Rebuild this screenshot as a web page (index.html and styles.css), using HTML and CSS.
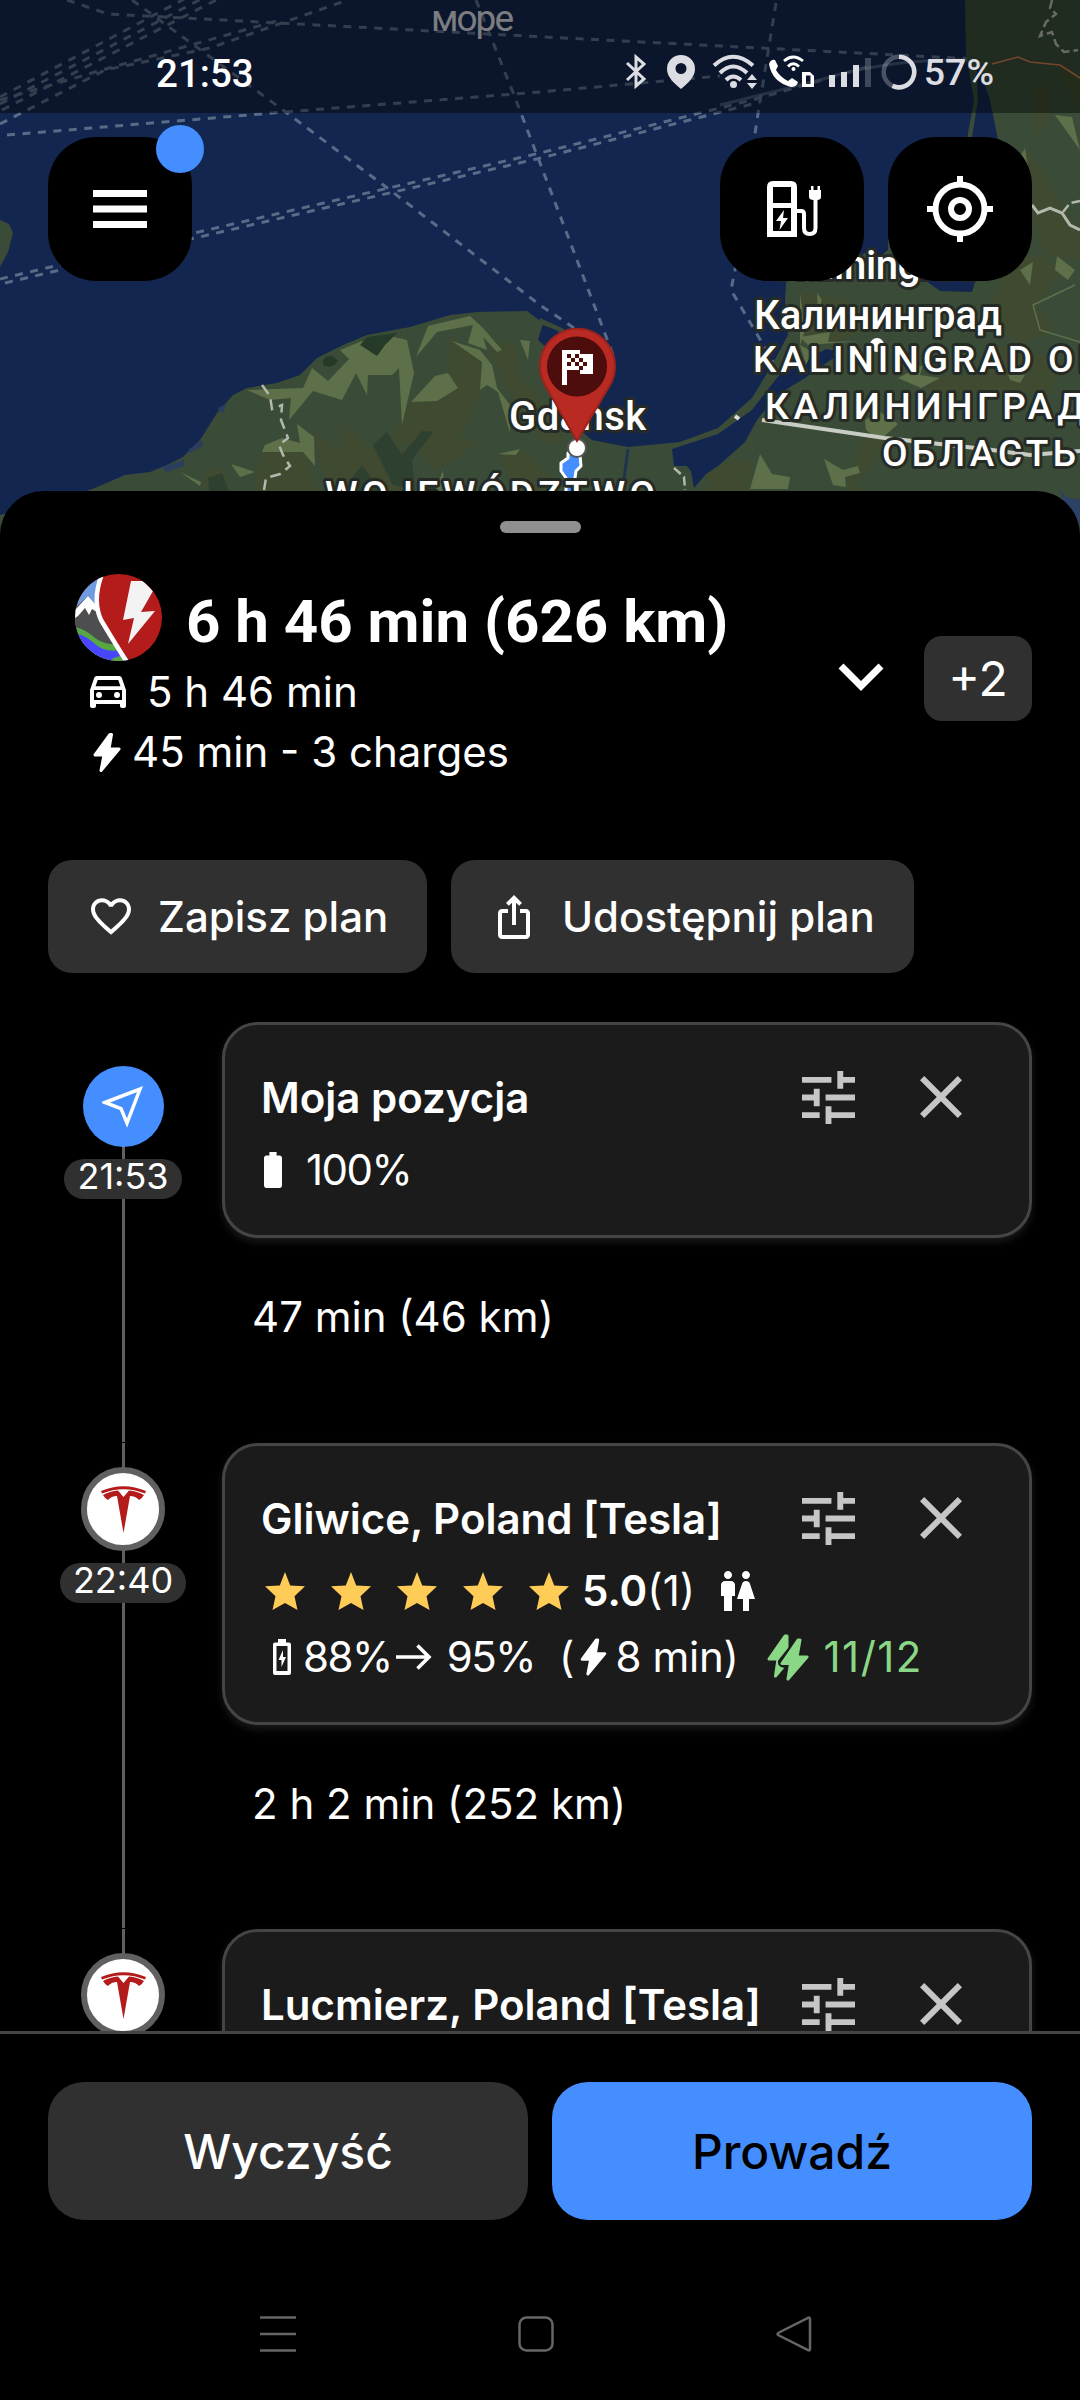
FILE: index.html
```html
<!DOCTYPE html>
<html lang="pl">
<head>
  <meta charset="UTF-8">
  <meta name="viewport" content="width=device-width, initial-scale=1.0">
  <title>Plan podróży</title>
  <link rel="stylesheet" href="styles.css">
</head>
<body>
  <!-- shared icons -->
  <svg class="sprite" width="0" height="0">
    <symbol id="tune" viewBox="3 3 18 18">
      <path d="M3,17V19H9V17H3M3,5V7H13V5H3M13,21V19H21V17H13V15H11V21H13M7,9V11H3V13H7V15H9V9H7M21,13V11H11V13H21M15,9H17V7H21V5H17V3H15V9Z"/>
    </symbol>
    <symbol id="close" viewBox="5 5 14 14">
      <path d="M19,6.41L17.59,5L12,10.59L6.41,5L5,6.41L10.59,12L5,17.59L6.41,19L12,13.41L17.59,19L19,17.59L13.41,12L19,6.41Z"/>
    </symbol>
    <symbol id="bolt" viewBox="0 0 28 40">
      <path d="M17 2 L2 22.500 H11 L8 38 L26 16.500 H16 L18.500 2 Z" fill="currentColor" stroke="currentColor" stroke-width="3" stroke-linejoin="round"/>
    </symbol>
    <symbol id="star" viewBox="0 0 40 38">
      <path d="M20 0 L25.200 13.500 L40 14.300 L29.500 24.200 L32.500 38 L20 31 L7.500 38 L10.500 24.200 L0 14.300 L14.800 13.500 Z"/>
    </symbol>
    <symbol id="tesla" viewBox="0 0 45 47">
      <path d="M0 5 Q22.500 -4.500 45 5 L44 7.500 Q22.500 -1 1 7.500 Z"/>
      <path d="M2 9 Q9 5 17 4.500 L22.500 11 L28 4.500 Q36 5 43 9 Q41.500 12 38 14 Q34.500 10 29 10 L22.500 47 L16 10 Q10.500 10 7 14 Q3.500 12 2 9 Z"/>
    </symbol>
  </svg>

  <div class="phone">
    <section class="map">
      <svg class="map-canvas" width="1080" height="545" viewBox="0 0 1080 545">
        <rect width="1080" height="545" fill="#13264f"/>

        <!-- ferry routes -->
        <g fill="none" stroke="#586b87" stroke-width="3" stroke-dasharray="8 7.500">
          <path d="M67 0 L108 14 L545 37 L975 59"/>
          <path d="M0 97 L188 -3 M0 104 L205 -3 M2 110 L222 -3 M0 124 L105 70 L210 48 L348 0"/>
          <path d="M0 100 L95 72 L280 20"/>
          <path d="M7 135 L285 112 L540 92 L720 76"/>
          <path d="M0 279 L190 234 L540 153 L760 98 L870 66"/>
          <path d="M5 283 L195 238 L545 157 L760 102"/>
          <path d="M132 0 L283 110 L390 190 L540 305 L580 332"/>
          <path d="M476 0 L514 95 L540 163 L615 360"/>
          <path d="M776 3 L757 120 L735 270 L731 290 L781 375"/>
        </g>
        <path d="M720 105 L820 80 Q890 58 975 60" fill="none" stroke="#586b87" stroke-width="3" opacity=".7"/>

        <!-- land -->
        <g fill="#3a4c38">
          <path d="M0 220 L9 224 L13 233 L8 252 L0 267 Z"/>
          <path d="M0 515 L60 500 L95 488 L125 475 L150 472 L167 465 L183 457 L200 440 L217 413 L233 395 L247 388 L277 383 L300 375 L317 358 L343 345 L367 335 L410 327 L450 315 L477 312 L527 311 L543 323 L538 340 L560 360 L575 395 L580 430 L592 440 L628 447 L680 442 L718 428 L752 398 L772 365 L788 335 L785 300 L786 282 L850 262 L930 215 L965 150 L974 100 L966 55 L965 0 L1080 0 L1080 545 L0 545 Z"/>
          <path d="M540 318 L562 328 L576 338 L572 342 L556 330 L540 324 Z"/>
        </g>
        <g fill="#13264f">
          <path d="M866 137 H888 V250 L866 268 Z"/>
          <path d="M976 60 L990 100 L998 140 L985 250 L972 292 L940 291 L922 278 L950 200 L972 137 L978 100 Z"/>
          <path d="M672 449 L692 472 L694 486 L703 476 L718 466 L745 442 L757 420 L777 395 L805 378 L842 352 L826 349 L803 362 L780 374 L752 410 L718 434 Z"/>
          <path d="M672 449 L674 466 L690 466 L694 488 L706 474 L700 455 Z"/>
        </g>
        <path d="M628 449 L623 486" stroke="#20344f" stroke-width="3" fill="none"/>

        <!-- terrain patches -->
        <g fill="#3f4a30">
          <path d="M408 406 L450 376 L450 335 L480 359 L483 390 L460 440 L480 442 L435 470 L395 432 Z"/>
          <path d="M487 340 L515 345 L520 375 L545 405 L565 440 L545 445 L520 410 L500 375 Z"/>
          <path d="M312 428 L338 452 L345 425 L372 450 L400 430 L408 500 L330 500 Z"/>
          <path d="M262 452 L304 453 L320 500 L250 500 Z M205 472 L225 468 L230 500 L203 500 Z"/>
          <path d="M498 455 L520 450 L550 475 L540 500 L510 480 Z"/>
          <path d="M706 475 L735 459 L753 463 L745 500 L712 495 Z"/>
          <path d="M800 292 L850 300 L870 330 L830 345 L800 340 Z"/>
          <path d="M1000 260 L1045 255 L1060 275 L1035 305 L1055 330 L1020 345 L985 310 L1000 290 Z"/>
          <path d="M925 378 L985 375 L1000 345 L1060 360 L1050 395 L1000 390 L960 395 L930 390 Z"/>
          <path d="M1010 160 L1030 150 L1060 200 L1080 230 L1080 260 L1045 255 Z"/>
          <path d="M865 430 L885 440 L870 465 L855 485 L865 495 L845 492 Z"/>
          <path d="M1035 90 L1050 80 L1050 115 L1037 140 Z M1065 60 L1080 80 L1080 110 L1060 75 Z"/>
        </g>
        <g fill="#5e7049">
          <path d="M247 390 L303 388 L312 368 L328 381 L349 359 L340 350 L362 341 L378 355 L390 336 L407 340 L414 373 L402 425 L399 368 L392 375 L368 375 L367 395 L356 373 L342 400 L313 391 L289 420 L291 398 L270 400 Z"/>
          <path d="M416 357 L428 326 L470 316 L483 328 L502 350 L497 352 L483 337 L487 350 L468 343 L473 325 L437 332 Z"/>
          <path d="M411 402 L435 376 L448 373 L458 388 L437 401 Z"/>
          <path d="M452 341 L480 350 L492 365 L497 388 L510 405 L510 433 L498 392 L487 385 L480 390 L482 362 Z"/>
          <path d="M297 424 L314 437 L315 466 L303 452 L262 452 L265 445 L282 438 L300 443 Z M231 464 L255 472 L240 477 Z M180 472 L201 482 L200 486 Z"/>
          <path d="M520 340 L530 341 L528 360 Z M498 454 L520 449 L516 455 Z M443 470 L445 500 L432 500 Z"/>
          <path d="M760 454 L772 474 L790 477 L788 489 L750 489 Z M824 459 L843 470 L858 466 L860 473 L845 477 L846 487 L833 485 Z"/>
          <path d="M800 293 L805 330 L800 345 L812 352 L806 365 L800 345 Z M817 293 L822 300 L818 312 Z"/>
          <path d="M898 378 L923 365 L920 375 L940 378 L921 388 Z M865 420 L880 412 L898 424 L880 440 L866 430 Z"/>
          <path d="M1057 256 L1075 270 L1068 280 L1055 270 Z M1020 270 L1033 262 L1030 285 Z M1007 370 L1025 375 L1020 383 L1010 380 Z"/>
          <path d="M1055 115 L1072 117 L1080 150 Z M1025 148 L1030 180 L1018 160 Z M800 337 L830 332 L828 342 L860 341 L808 345 Z"/>
        </g>
        <g fill="#2e402f">
          <path d="M373 445 L387 432 L402 455 L422 431 L433 432 L412 460 L415 490 L393 485 Z M208 478 L222 473 L232 500 L210 500 Z M349 482 L362 465 L380 490 L345 495 Z"/>
          <path fill="#263a28" d="M360 345 L367 337 L397 333 L385 345 L377 356 Z M323 360 Q330 351 338 361 Q332 370 323 365 Z"/>
        </g>
        <path d="M1075 285 L1033 305 L1040 330 L1080 342" fill="none" stroke="#5e7049" stroke-width="1.500"/>
        <path d="M1058 488 L1066 497 L1080 500 L1080 525 L1068 510 Z" fill="#2d4065"/>
        <g fill="#2b3e5e">
          <path d="M218 408 L226 404 L224 412 L219 412 Z M188 450 L202 440 L203 446 L190 453 Z M162 467 L184 460 L184 466 L166 472 Z"/>
        </g>

        <!-- borders and roads -->
        <g fill="none" stroke="#b3b8ae">
          <path d="M262 385 L270 396 L272 409 L282 405 L281 420 L288 438 L279 445 L283 455 L290 466 L280 474 L266 478 L264 490" stroke-width="2.500" stroke-dasharray="11 6"/>
          <path d="M1052 0 L1050 8 L1056 14 L1046 22 L1040 36 L1052 32 L1056 44 L1064 52 L1078 50" stroke-width="2.500" stroke-dasharray="9 4"/>
          <path d="M1032 205 L1038 213 L1050 208 L1062 213 L1070 225 L1080 230" stroke-width="3"/>
          <path d="M1063 212 L1070 203 L1080 201 M674 468 L684 477 L685 490" stroke-width="2.500" stroke-dasharray="9 4"/>
          <path d="M762 420 L885 438 L985 449 L1030 455 L1080 451" stroke="#c8ccc4" stroke-width="4"/>
        </g>
        <path d="M992 64 L1018 57 L1030 62 L1060 65 L1080 78" fill="none" stroke="#c9784a" stroke-width="1.500"/>
        <circle cx="877" cy="345" r="7" fill="#fff"/>
        <path d="M735 416 L739 419" stroke="#ddd" stroke-width="4"/>

        <!-- route -->
        <path d="M568 453 L568 458 L561 463 L561 471 L566 478 L566 500 H573 L575 478 L576 471 L581 466 L580 455 Z" fill="#448eff" stroke="#fff" stroke-width="3" stroke-linejoin="round"/>

        <g class="map-label">
          <text x="431" y="31" font-size="37" textLength="83" class="sea-label">море</text>
          <text x="509" y="430" font-size="40" textLength="137">Gdańsk</text>
          <text x="325" y="507" font-size="37" textLength="330">WOJEWÓDZTWO</text>
          <text x="778" y="279" font-size="40" textLength="199">Kaliningrad</text>
          <text x="754" y="329" font-size="40" textLength="248">Калининград</text>
          <text x="753" y="372" font-size="37" textLength="279">KALININGRAD</text>
          <text x="1048" y="372" font-size="37" letter-spacing="5">OBLAST</text>
          <text x="765" y="419" font-size="37" textLength="320">КАЛИНИНГРАД</text>
          <text x="882" y="466" font-size="37" textLength="194">ОБЛАСТЬ</text>
        </g>

        <!-- destination pin -->
        <circle cx="577" cy="448" r="9" fill="#fff" stroke="#555" stroke-width="2"/>
        <path d="M577 441 L545 385 A37.500 37.500 0 1 1 610 385 Z" fill="#b82a22" stroke="#9c231d" stroke-width="2"/>
        <circle cx="577" cy="366.500" r="30" fill="#4c0d0c"/>
        <path d="M562 350 H580 V354 H593 V374 H580 V370 H567 V385 H562 Z" fill="#fff"/>
        <path d="M567 354 h4 v4 h-4z M575 354 h4 v4 h-4z M571 358 h4 v4 h-4z M579 358 h4 v4 h-4z M567 362 h4 v4 h-4z M575 362 h4 v4 h-4z M583 362 h4 v4 h-4z M579 366 h4 v4 h-4z" fill="#4c0d0c"/>
      </svg>

      <div class="status-bar">
        <span class="clock">21:53</span>
        <div class="status-right">
          <svg width="250" height="36" viewBox="623 54 250 36" fill="#dcdde3">
            <path d="M626 63 L643 79 L635 86 V57 L643 64 L626 80" fill="none" stroke="#dcdde3" stroke-width="3"/>
            <path fill-rule="evenodd" d="M680 55 A14 14 0 0 1 694 69 C694 77 687 83 680 89 C673 83 666 77 666 69 A14 14 0 0 1 680 55 Z M680 63 A5.500 5.500 0 1 0 680 74 A5.500 5.500 0 1 0 680 63 Z"/>
            <g fill="none" stroke="#dcdde3" stroke-width="4">
              <path d="M713 65.500 Q732 48 752 65.500"/>
              <path d="M719 73 Q732 60 746 73"/>
              <path d="M725 80 Q732 73 740 80"/>
            </g>
            <circle cx="732.500" cy="84.500" r="3.500"/>
            <path d="M746 80 L751 74 L756 80 Z M746 83 L751 89 L756 83 Z"/>
            <path fill="#fff" d="M768 64 Q770 59 774 60 L777 66 L775 70 Q779 77 787 81 L791 78 L797 82 Q796 87 790 87 Q771 82 768 64 Z"/>
            <g fill="none" stroke="#fff" stroke-width="2.800">
              <path d="M783 61 Q792 53 802 61"/>
              <path d="M787 66.500 Q792 61 798 66.500"/>
            </g>
            <circle cx="792.500" cy="69" r="2" fill="#fff"/>
            <path fill="#fff" fill-rule="evenodd" d="M801 72 H809 L813 76 V87 H801 Z M805 75.500 V84 H809.500 V75.500 Z"/>
            <path d="M828 75 h6 v12 h-6z M840 72 h6 v15 h-6z M852 65 h6 v22 h-6z"/>
            <path d="M864 58 h6 v29 h-6z" opacity=".25"/>
          </svg>
          <svg class="battery-ring" width="36" height="36" viewBox="0 0 36 36" fill="none" stroke="#dcdde3" stroke-width="4.500">
            <circle cx="18" cy="18" r="15.300" opacity=".3"/>
            <path d="M18 2.700 A15.300 15.300 0 1 1 11.500 31.900"/>
          </svg>
          <span class="battery">57%</span>
        </div>
      </div>

      <div class="map-buttons">
        <button class="map-btn">
          <svg width="54" height="38" viewBox="0 0 54 38"><path fill="#fff" d="M0 0h54v7H0zM0 15.500h54v7H0zM0 31h54v7H0z"/></svg>
          <span class="dot"></span>
        </button>
        <span class="spacer"></span>
        <button class="map-btn">
          <svg class="charger-icon" width="56" height="56" viewBox="0 0 56 56" fill="none" stroke="#fff">
            <path d="M3 53 V6 Q3 3 6 3 H24 Q27 3 27 6 V53 Z" stroke-width="6"/>
            <path d="M3 24.500 H27" stroke-width="5"/>
            <path d="M30 30 H34 Q37 30 37 33 V47 Q37 53 42.500 53 Q48.500 53 48.500 47 V18" stroke-width="4"/>
            <path d="M42 9 H44 V5 H46.500 V9 H50.500 V5 H53 V9 H54 V16 Q54 19 50 19 H47 Q42 19 42 16 Z" fill="#fff" stroke="none"/>
            <path d="M17 29 L9 40 H14 L12.500 49 L21 37 H16 Z" fill="#fff" stroke="none"/>
          </svg>
        </button>
        <button class="map-btn">
          <svg width="66" height="66" viewBox="0 0 66 66" fill="none" stroke="#fff" stroke-width="6">
            <circle cx="33" cy="33" r="24.500"/>
            <circle cx="33" cy="33" r="9"/>
            <path d="M33 0V9M33 57V66M0 33H9M57 33H66"/>
          </svg>
        </button>
      </div>
    </section>

    <main class="sheet">
      <div class="handle"></div>

      <header class="summary">
        <div class="summary-text">
          <div class="total">
            <svg class="logo" width="88" height="88" viewBox="0 0 88 88">
              <clipPath id="logoClip"><circle cx="43.500" cy="43.500" r="43.500"/></clipPath>
              <g clip-path="url(#logoClip)">
                <rect width="88" height="88" fill="#b41c1b"/>
                <path d="M0 0 H28 Q18 26 26 46 L55 88 H0 Z" fill="#6f9ce0"/>
                <path d="M0 34 L13 22 L20 30 L26 44 L46 76 L20 70 L0 55 Z" fill="#4d4e50"/>
                <path d="M0 36 L13 22 L21 31 L22 38 L17 35 L14 41 L10 34 L3 42 L0 44 Z" fill="#fff"/>
                <path d="M0 53 Q12 56 20 64 Q30 71 40 70 L54 88 H0 Z" fill="#57a843"/>
                <path d="M0 59 Q12 62 20 70 Q30 79 45 76 L50 82 Q38 82 34 88 H0 Z" fill="#4845ff"/>
                <path d="M27 0 Q17 26 26 46 Q38 66 53 90" fill="none" stroke="#fff" stroke-width="4.500"/>
                <path d="M56 7 H68 L78 17 L66 38 L80 37 L53 70 L59 44 L48 46 Z" fill="#f3f3f3"/>
              </g>
            </svg>
            <h1>6 h 46 min (626 km)</h1>
          </div>
          <div class="summary-line drive">
            <svg width="36" height="32" viewBox="3 5 18 16" fill="#fff">
              <path d="M18.920 6.010C18.720 5.420 18.160 5 17.500 5h-11c-.66 0-1.210.42-1.420 1.010L3 12v8c0 .55.45 1 1 1h1c.55 0 1-.45 1-1v-1h12v1c0 .55.45 1 1 1h1c.55 0 1-.45 1-1v-8l-2.080-5.990zM6.850 7h10.290l1.080 3.110H5.770L6.850 7zM19 17H5v-5h14v5z"/>
              <circle cx="7.500" cy="14.500" r="1.500"/><circle cx="16.500" cy="14.500" r="1.500"/>
            </svg>
            <span>5 h 46 min</span>
          </div>
          <div class="summary-line charge">
            <svg width="28" height="41"><use href="#bolt"/></svg>
            <span>45 min - 3 charges</span>
          </div>
        </div>
        <svg class="chevron" width="46" height="28" viewBox="0 0 46 28" fill="none" stroke="#fff" stroke-width="7"><path d="M3 3 L23 23 L43 3"/></svg>
        <span class="more">+2</span>
      </header>

      <div class="actions">
        <button class="action save">
          <svg width="40" height="37" viewBox="2 3 20 18.350" fill="#fff"><path d="M16.500 3c-1.740 0-3.410.81-4.500 2.090C10.910 3.810 9.240 3 7.500 3 4.420 3 2 5.420 2 8.500c0 3.780 3.400 6.860 8.550 11.540L12 21.350l1.450-1.320C18.600 15.360 22 12.280 22 8.500 22 5.420 19.580 3 16.500 3zm-4.400 15.550l-.1.1-.1-.1C7.140 14.240 4 11.390 4 8.500 4 6.500 5.500 5 7.500 5c1.540 0 3.040.99 3.570 2.360h1.870C13.460 5.990 14.960 5 16.500 5c2 0 3.500 1.500 3.500 3.500 0 2.890-3.140 5.740-7.900 10.050z"/></svg>
          <span>Zapisz plan</span>
        </button>
        <button class="action share">
          <svg width="32" height="44" viewBox="4 1 16 22" fill="#fff"><path d="M16 5l-1.420 1.420-1.590-1.590V16h-1.980V4.830L9.420 6.420 8 5l4-4 4 4zm4 5v11c0 1.100-.9 2-2 2H6c-1.110 0-2-.9-2-2V10c0-1.110.89-2 2-2h3v2H6v11h12V10h-3V8h3c1.100 0 2 .89 2 2z"/></svg>
          <span>Udostępnij plan</span>
        </button>
      </div>

      <div class="timeline">
        <div class="stop first">
          <div class="rail">
            <div class="node position">
              <svg width="42" height="44" viewBox="0 0 42 44" fill="none" stroke="#fff" stroke-width="3.500"><path d="M3 17.500 L38 4 L25 38 L19 23.500 Z"/></svg>
            </div>
            <span class="time">21:53</span>
          </div>
          <div class="stop-body">
            <div class="card">
              <div class="card-head">
                <h2>Moja pozycja</h2>
                <svg class="tune" width="53" height="53"><use href="#tune"/></svg>
                <svg class="close" width="42" height="42"><use href="#close"/></svg>
              </div>
              <div class="card-row">
                <svg class="battery-full" width="18" height="36" viewBox="7 2 10 20" fill="#fff"><path d="M15.670 4H14V2h-4v2H8.330C7.600 4 7 4.600 7 5.330v15.330C7 21.400 7.600 22 8.330 22h7.330c.74 0 1.340-.6 1.340-1.330V5.330C17 4.600 16.400 4 15.670 4z"/></svg>
                <span class="percent">100%</span>
              </div>
            </div>
            <p class="leg">47 min (46 km)</p>
          </div>
        </div>

        <div class="stop second">
          <div class="rail">
            <div class="node charger"><svg width="45" height="47"><use href="#tesla"/></svg></div>
            <span class="time">22:40</span>
          </div>
          <div class="stop-body">
            <div class="card">
              <div class="card-head">
                <h2>Gliwice, Poland [Tesla]</h2>
                <svg class="tune" width="53" height="53"><use href="#tune"/></svg>
                <svg class="close" width="42" height="42"><use href="#close"/></svg>
              </div>
              <div class="card-row rating">
                <div class="stars">
                  <svg width="40" height="38"><use href="#star"/></svg>
                  <svg width="40" height="38"><use href="#star"/></svg>
                  <svg width="40" height="38"><use href="#star"/></svg>
                  <svg width="40" height="38"><use href="#star"/></svg>
                  <svg width="40" height="38"><use href="#star"/></svg>
                </div>
                <b>5.0</b><span class="votes">(1)</span>
                <svg class="wc" width="34" height="40" viewBox="4 2 17 20" fill="#fff"><path d="M5.500 22v-7.500H4V9c0-1.100.9-2 2-2h3c1.100 0 2 .9 2 2v5.500H9.500V22h-4zM18 22v-6h3l-2.540-7.630C18.180 7.550 17.420 7 16.560 7h-.12c-.86 0-1.630.55-1.900 1.370L12 16h3v6h3zM7.500 6c1.110 0 2-.89 2-2s-.89-2-2-2-2 .89-2 2 .89 2 2 2zm9 0c1.110 0 2-.89 2-2s-.89-2-2-2-2 .89-2 2 .89 2 2 2z"/></svg>
              </div>
              <div class="card-row charging">
                <svg class="battery-charge" width="18" height="36" viewBox="0 0 18 36">
                  <path fill="#fff" fill-rule="evenodd" d="M5 0 H13 V3.500 H16 Q18 3.500 18 5.500 V34 Q18 36 16 36 H2 Q0 36 0 34 V5.500 Q0 3.500 2 3.500 H5 Z M3.500 7 V32 H14.500 V7 Z M10 11 V18 H13 L8.500 28 V21 H5.500 Z"/>
                </svg>
                <span class="percent">88%</span>
                <svg class="arrow" width="36" height="26" viewBox="0 0 36 26" fill="none" stroke="#fff" stroke-width="3.600"><path d="M0 13 H33 M21.500 1.500 L33 13 L21.500 24.500"/></svg>
                <span class="percent">95%</span>
                <span class="paren">(</span>
                <svg class="flash" width="27" height="38"><use href="#bolt"/></svg>
                <span class="duration">8 min)</span>
                <svg class="stalls" width="42" height="47" viewBox="0 0 42 47" fill="#8ad886" stroke="#8ad886" stroke-width="3" stroke-linejoin="round">
                  <path d="M18 2 L2 25 H11 L8.500 42 L22 26 L20 15 V2 Z"/>
                  <path d="M31 5.500 L13.500 27.500 Q12.500 32 21.500 31.500 L20 46 L40 23 H30 L33 5.500 Z" stroke="#1b1b1b" stroke-width="5"/>
                  <path d="M31 6 L15 29.500 H23.500 L21 45 L40 23 H30 L33 6 Z"/>
                </svg>
                <span class="free">11/12</span>
              </div>
            </div>
            <p class="leg">2 h 2 min (252 km)</p>
          </div>
        </div>

        <div class="stop third">
          <div class="rail">
            <div class="node charger"><svg width="45" height="47"><use href="#tesla"/></svg></div>
          </div>
          <div class="stop-body">
            <div class="card">
              <div class="card-head">
                <h2>Lucmierz, Poland [Tesla]</h2>
                <svg class="tune" width="53" height="53"><use href="#tune"/></svg>
                <svg class="close" width="42" height="42"><use href="#close"/></svg>
              </div>
            </div>
          </div>
        </div>
      </div>
    </main>

    <footer class="bottom-bar">
      <div class="bottom-buttons">
        <button class="clear">Wyczyść</button>
        <button class="drive-btn">Prowadź</button>
      </div>
      <nav class="system-nav">
        <svg width="36" height="36" viewBox="0 0 36 36"><path d="M0 1.500H36M0 18H36M0 34.500H36"/></svg>
        <svg width="36" height="36" viewBox="0 0 36 36"><rect x="1.500" y="1.500" width="33" height="33" rx="7"/></svg>
        <svg width="36" height="36" viewBox="0 0 36 36"><path d="M32 1.800 Q34 1 34 3 V33 Q34 35 32 34.200 L3 19.500 Q0 18 3 16.500 Z"/></svg>
      </nav>
    </footer>
  </div>
</body>
</html>
```
FILE: styles.css
```css
* {
  box-sizing: border-box;
}

body {
  margin: 0;
  background: #000;
  color: #fff;
  font-family: Inter, Roboto, sans-serif;
  font-size: 42px;
}

h1, h2, p {
  margin: 0;
}

svg {
  display: block;
  flex-shrink: 0;
}

button {
  border: none;
  color: #fff;
  font-family: inherit;
  padding: 0;
}

.sprite {
  position: absolute;
}

.phone {
  width: 1080px;
  height: 2400px;
  overflow: hidden;
  display: flex;
  flex-direction: column;
}

/* map */
.map {
  position: relative;
  height: 491px;
  flex-shrink: 0;
}

.map-canvas {
  position: absolute;
  top: 0;
  left: 0;
}

.map-label {
  font-family: Roboto, sans-serif;
  font-weight: 500;
  fill: #fff;
  stroke: #262b26;
  stroke-width: 6px;
  stroke-linejoin: round;
  paint-order: stroke;
}

.sea-label {
  fill: #d5d7dc;
  stroke: none;
  font-weight: 400;
}

.status-bar {
  position: relative;
  height: 113px;
  padding: 31px 86px 0 156px;
  background: rgba(0, 0, 0, 0.42);
  display: flex;
  justify-content: space-between;
  align-items: flex-start;
  font-family: Roboto, sans-serif;
  font-weight: 500;
}

.clock {
  font-size: 38.5px;
  line-height: 85px;
}

.status-right {
  display: flex;
  align-items: center;
  height: 82px;
  color: #dcdde3;
}

.battery-ring {
  margin: 0 7px 0 7px;
}

.battery {
  font-size: 37.5px;
}

.map-buttons {
  position: relative;
  display: flex;
  gap: 24px;
  padding: 24px 48px 0;
}

.spacer {
  flex: 1;
}

.map-btn {
  position: relative;
  width: 144px;
  height: 144px;
  border-radius: 48px;
  background: #000;
  display: flex;
  align-items: center;
  justify-content: center;
}

.charger-icon {
  margin-left: 6px;
}

.dot {
  position: absolute;
  top: -12px;
  right: -12px;
  width: 48px;
  height: 48px;
  border-radius: 50%;
  background: #448eff;
}

/* sheet */
.sheet {
  position: relative;
  height: 1540px;
  flex-shrink: 0;
  padding: 30px 48px 0;
  background: #000;
  border-radius: 44px 44px 0 0;
}

.handle {
  width: 81px;
  height: 12px;
  margin: 0 auto;
  border-radius: 6px;
  background: #8f8f8f;
}

.summary {
  display: flex;
  align-items: center;
  height: 208px;
  margin-top: 41px;
}

.summary-text {
  flex: 1;
  padding-left: 27px;
}

.total {
  display: flex;
  align-items: center;
  height: 88px;
  gap: 23px;
}

.total h1 {
  font-family: Roboto, sans-serif;
  font-size: 60px;
  font-weight: 700;
  line-height: 80px;
  padding-top: 8px;
}

.summary-line {
  display: flex;
  align-items: center;
  height: 60px;
  line-height: 60px;
}

.drive {
  padding-left: 15px;
  gap: 21px;
}

.charge {
  padding-left: 18px;
  gap: 11px;
}

.chevron {
  margin: 0 40px 2px 0;
}

.more {
  width: 108px;
  height: 85px;
  border-radius: 18px;
  background: #303030;
  font-size: 48px;
  line-height: 85px;
  text-align: center;
}

.actions {
  display: flex;
  gap: 24px;
  margin-top: 78px;
}

.action {
  display: flex;
  align-items: center;
  height: 113px;
  border-radius: 24px;
  background: #303030;
  font-size: 42px;
  font-weight: 500;
}

.save {
  width: 379px;
  padding-left: 43px;
  gap: 27px;
}

.share {
  width: 463px;
  padding-left: 47px;
  gap: 32px;
}

/* timeline */
.timeline {
  height: 1009px;
  margin: 49px -48px 0;
  padding: 0 48px;
  overflow: hidden;
}

.stop {
  display: flex;
}

.first {
  height: 421px;
}

.second {
  height: 486px;
}

.rail {
  position: relative;
  width: 150px;
  margin-right: 24px;
  padding-top: 24px;
  display: flex;
  flex-direction: column;
  align-items: center;
}

.first .rail {
  padding-top: 44px;
}

/* vertical line behind the stops */
.rail::before {
  content: "";
  position: absolute;
  top: 0;
  bottom: 1px;
  left: 74px;
  width: 3px;
  background: #606060;
}

.first .rail::before {
  top: 80px;
}

.node {
  position: relative;
  width: 84px;
  height: 84px;
  border-radius: 50%;
  display: flex;
  align-items: center;
  justify-content: center;
}

.position {
  width: 81px;
  height: 81px;
  background: #448eff;
}

.charger {
  background: #fff;
  border: 6px solid #606060;
  fill: #b41c1b;
}

.time {
  position: relative;
  height: 40px;
  margin-top: 12px;
  padding: 0 13px;
  border-radius: 20px;
  background: #303030;
  font-size: 36px;
  line-height: 35px;
}

.stop-body {
  flex: 1;
}

.card {
  padding: 43px 67px 32px 36px;
  border: 3px solid #454545;
  border-radius: 36px;
  background: #1b1b1b;
  box-shadow: 0 4px 8px rgba(255, 255, 255, 0.1);
}

.card-head {
  display: flex;
  align-items: center;
  height: 60px;
  margin-bottom: 9px;
}

.card-head h2 {
  flex: 1;
  font-size: 42px;
  font-weight: 600;
  line-height: 60px;
  white-space: nowrap;
}

.tune, .close {
  margin-bottom: 2px;
  fill: #c6c6c6;
}

.tune {
  margin-right: 65px;
}

.card-row {
  display: flex;
  align-items: center;
  height: 66px;
  line-height: 66px;
  white-space: nowrap;
}

.percent {
  letter-spacing: -1.5px;
}

.battery-full {
  margin: 0 24px 0 3px;
}

.stars {
  display: flex;
  gap: 26px;
  margin: 0 13px 0 4px;
  fill: #ffcd57;
}

.rating b {
  font-weight: 600;
}

.wc {
  margin-left: 26px;
}

.battery-charge {
  margin: 0 12px;
}

.arrow {
  margin: 0 15px 0 4px;
}

.paren {
  margin-left: 24px;
}

.flash {
  margin: 0 8px 0 6px;
}

.duration {
  letter-spacing: -0.3px;
}

.stalls {
  margin: 0 14px 0 29px;
}

.free {
  color: #8ad886;
  letter-spacing: 1.5px;
}

.leg {
  margin: 49px 0 0 30px;
  line-height: 60px;
}

/* bottom */
.bottom-bar {
  position: relative;
  flex: 1;
  border-top: 3px solid #454545;
  background: #000;
}

.bottom-buttons {
  display: flex;
  gap: 24px;
  padding: 48px 48px 0;
}

.bottom-buttons button {
  flex: 1;
  height: 138px;
  border-radius: 36px;
  background: #303030;
  font-size: 48px;
  font-weight: 500;
}

.bottom-buttons .drive-btn {
  background: #448eff;
  color: #000;
}

.system-nav {
  display: flex;
  gap: 222px;
  padding: 96px 0 0 260px;
  fill: none;
  stroke: #666;
  stroke-width: 2.500;
}
```
